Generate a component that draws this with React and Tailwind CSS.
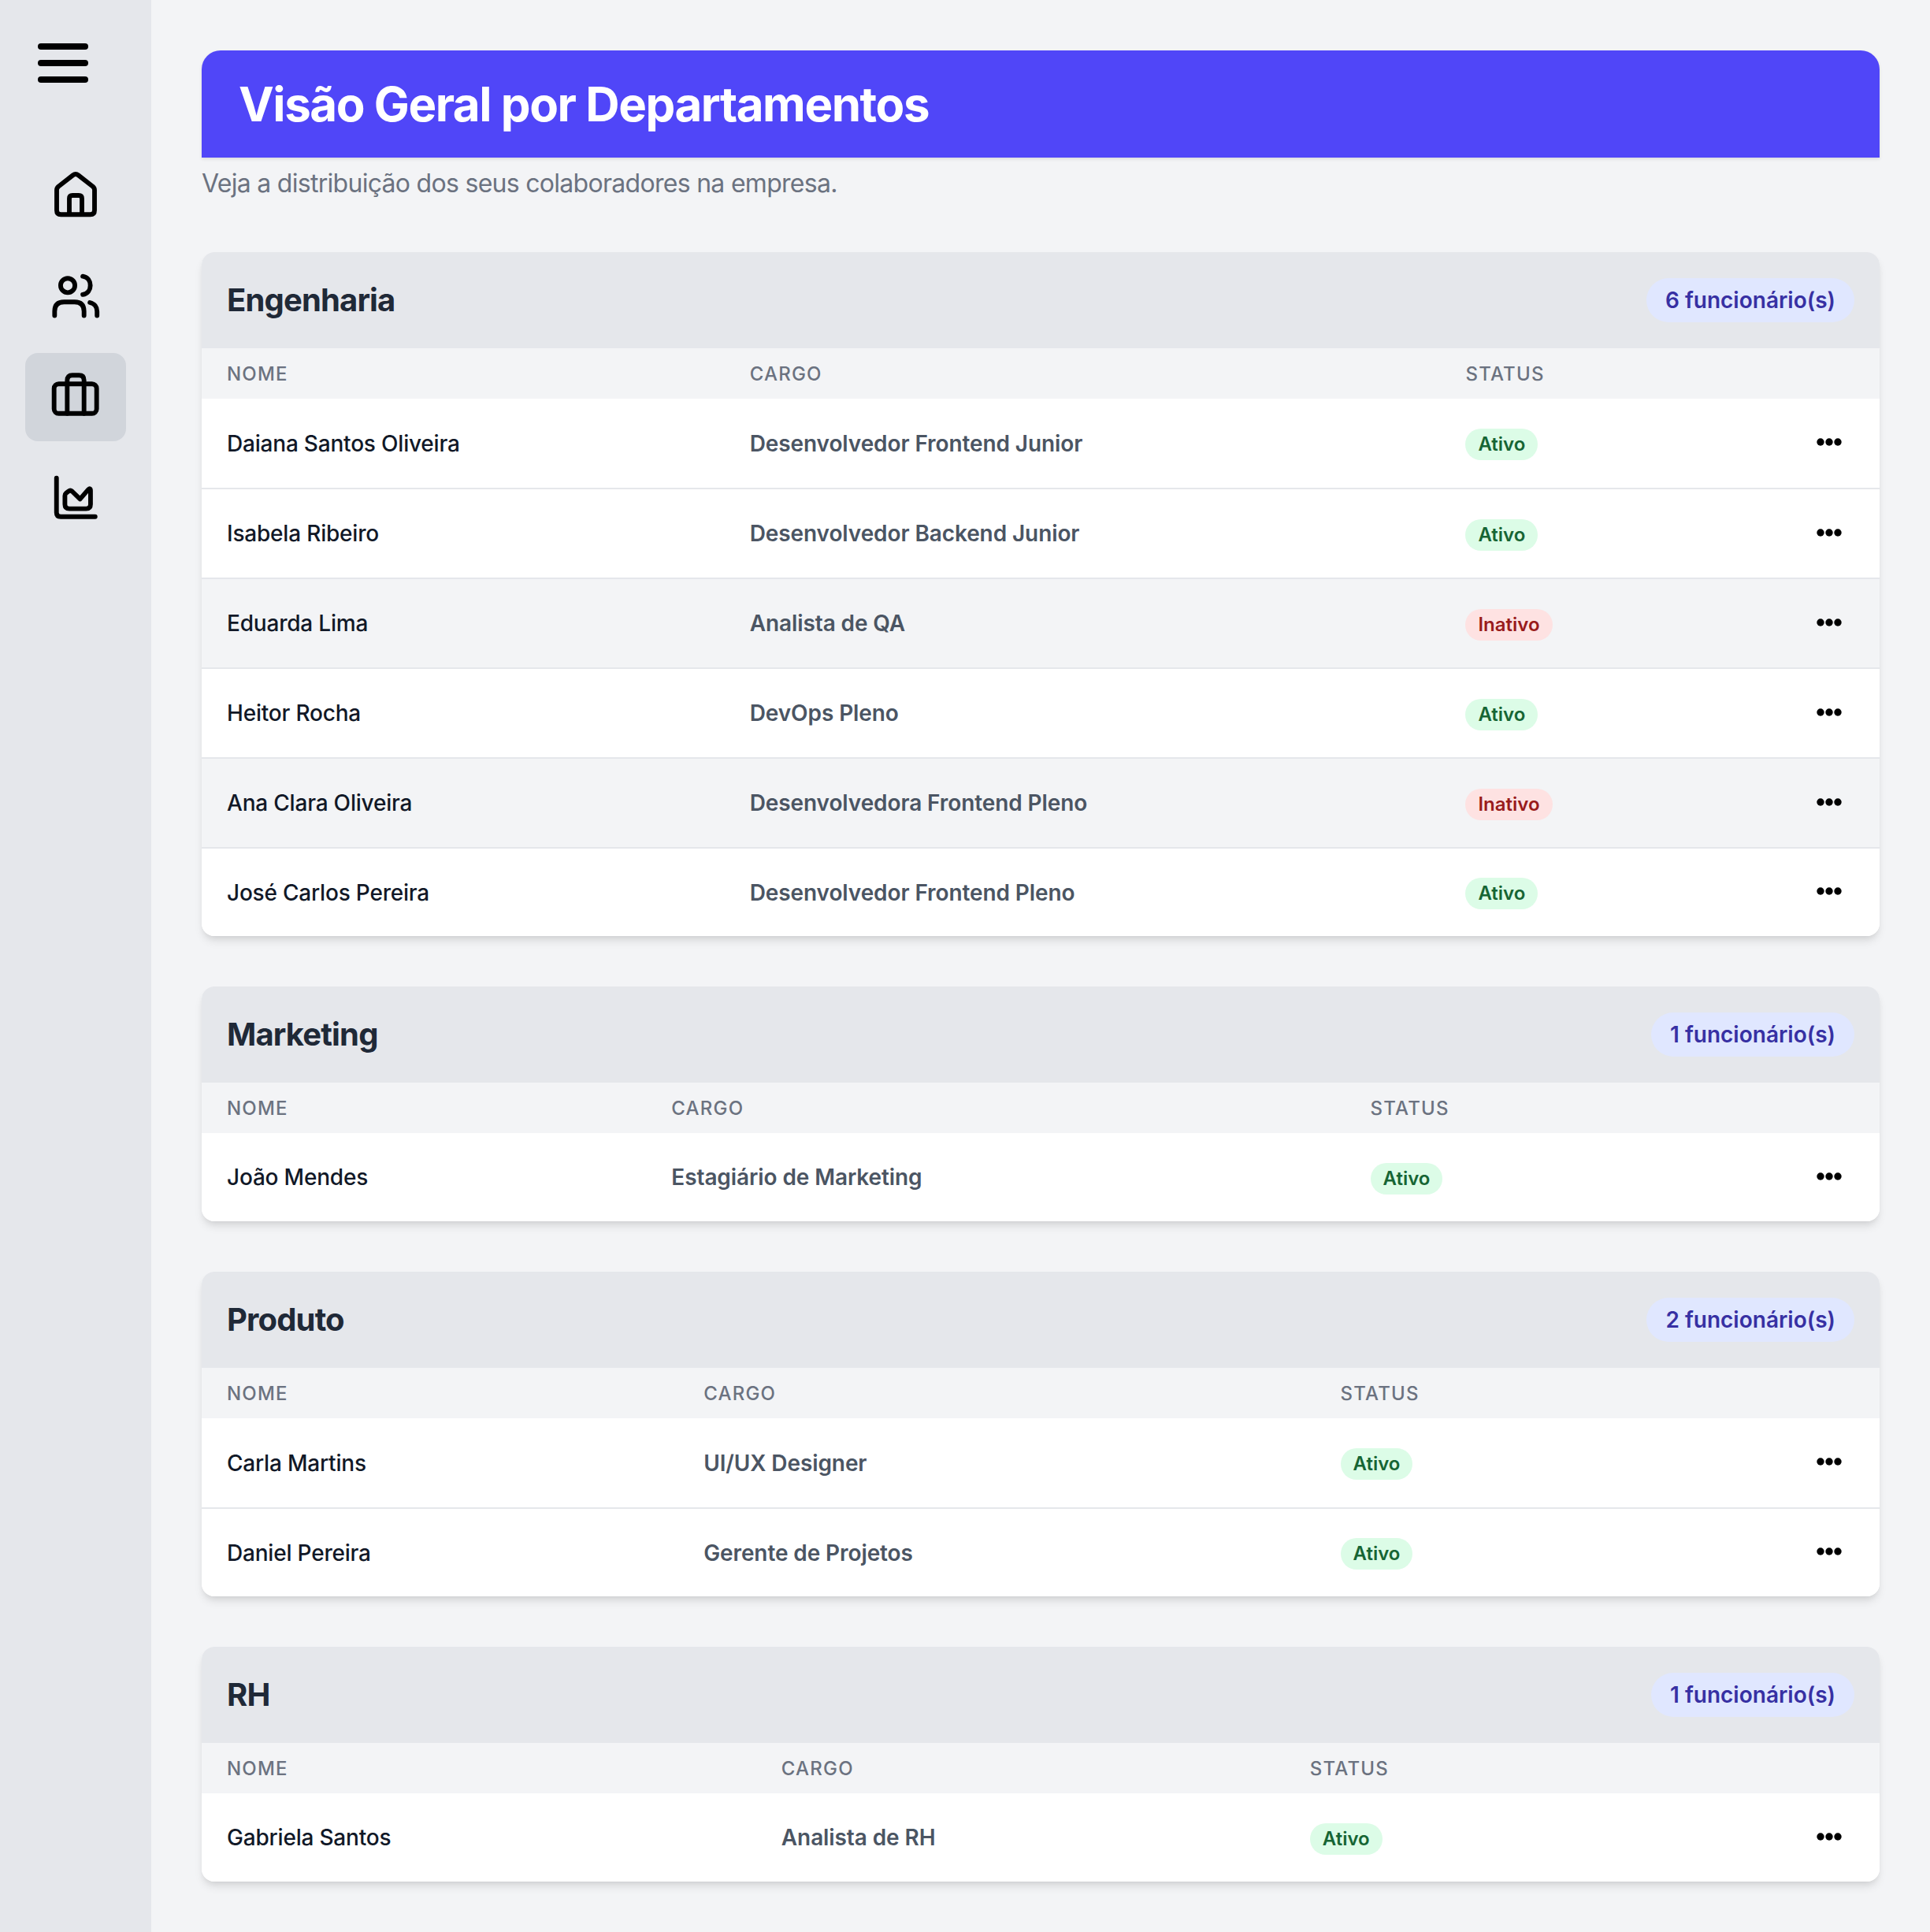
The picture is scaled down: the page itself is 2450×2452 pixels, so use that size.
const DEPARTMENTS = [
  {
    name: 'Engenharia',
    people: [
      { name: 'Daiana Santos Oliveira', role: 'Desenvolvedor Frontend Junior', active: true },
      { name: 'Isabela Ribeiro', role: 'Desenvolvedor Backend Junior', active: true },
      { name: 'Eduarda Lima', role: 'Analista de QA', active: false },
      { name: 'Heitor Rocha', role: 'DevOps Pleno', active: true },
      { name: 'Ana Clara Oliveira', role: 'Desenvolvedora Frontend Pleno', active: false },
      { name: 'José Carlos Pereira', role: 'Desenvolvedor Frontend Pleno', active: true },
    ],
  },
  {
    name: 'Marketing',
    people: [{ name: 'João Mendes', role: 'Estagiário de Marketing', active: true }],
  },
  {
    name: 'Produto',
    people: [
      { name: 'Carla Martins', role: 'UI/UX Designer', active: true },
      { name: 'Daniel Pereira', role: 'Gerente de Projetos', active: true },
    ],
  },
  {
    name: 'RH',
    people: [{ name: 'Gabriela Santos', role: 'Analista de RH', active: true }],
  },
]

const NavIcons = [
  () => (
    <path transform="translate(0 -0.5)" d="M3 10 Q3 9 3.8 8.3 L10.7 2.9 Q12 1.9 13.3 2.9 L20.2 8.3 Q21 9 21 10 V19.6 Q21 21.6 19 21.6 H5 Q3 21.6 3 19.6 Z M9 21.6 V14 Q9 12.5 10.5 12.5 H13.5 Q15 12.5 15 14 V21.6" />
  ),
  () => (
    <g transform="translate(0 -0.4)">
      <circle cx="8.25" cy="7.25" r="3.4" />
      <path d="M2 21.6 V19.5 Q2 15.1 6.5 15.1 H11.5 Q16 15.1 16 19.5 V21.6" />
      <path d="M15.4 2.9 C20.2 3.6 20.2 10.9 15.4 11.6" />
      <path d="M18.8 15.4 C21 15.9 22.2 17.6 22.2 19.6 V21.6" />
    </g>
  ),
  () => (
    <>
      <rect x="1.75" y="5.7" width="20.25" height="14.1" rx="2.2" />
      <path d="M8 19.8 V4 Q8 1.6 10.4 1.6 H13.6 Q16 1.6 16 4 V19.8" />
    </>
  ),
  () => (
    <>
      <path d="M2.9 2.5 V18.9 Q2.9 20.9 4.9 20.9 H21.3" />
      <path d="M6.9 11 Q6.9 10.2 7.5 9.7 L8.6 8.8 Q9.5 8.1 10.4 8.9 L14.1 12.5 L18 8 Q19.1 7 19.1 8.5 V15 Q19.1 17.1 17 17.1 H9 Q6.9 17.1 6.9 15 Z" />
    </>
  ),
]

function Dots() {
  return (
    <svg viewBox="0 0 32 10" width="32" height="10" fill="currentColor">
      <circle cx="5" cy="5" r="4.7" />
      <circle cx="16" cy="5" r="4.7" />
      <circle cx="27" cy="5" r="4.7" />
    </svg>
  )
}

function Department({ name, people }) {
  return (
    <section className="rounded-[16px] overflow-hidden bg-white shadow-[0_8px_12px_-2px_rgba(0,0,0,0.1),0_4px_8px_-4px_rgba(0,0,0,0.1)]">
      <div className="flex items-center justify-between bg-[#e5e7eb] h-[122px] px-[32px]">
        <h2 className="text-[40px] leading-[56px] font-bold tracking-[-0.85px] text-[#1f2937]">{name}</h2>
        <span className="rounded-full bg-[#e0e7ff] px-[24px] py-[8px] text-[28px] leading-[40px] font-semibold text-[#3730a3]">
          {people.length} funcionário(s)
        </span>
      </div>
      <table className="w-full">
        <thead className="bg-[#f3f4f6]">
          <tr>
            {['Nome', 'Cargo', 'Status'].map((h) => (
              <th key={h} className="px-[32px] pt-[17px] pb-[15px] text-left text-[24px] leading-[32px] font-medium uppercase tracking-[1.2px] text-[#6b7280]">
                {h}
              </th>
            ))}
            <th className="px-[48px]"><span className="block w-[32px]"></span></th>
          </tr>
        </thead>
        <tbody>
          {people.map((p, i) => (
            <tr key={p.name} className={`border-b-2 border-[#e5e7eb] last:border-b-0 ${p.active ? 'bg-white' : 'bg-[#f3f4f6]'}`}>
              <td className={`px-[32px] text-[28px] font-medium tracking-[-0.2px] text-[#111827] whitespace-nowrap ${i < people.length - 1 ? 'h-[114px]' : 'h-[112px]'}`}>{p.name}</td>
              <td className="px-[32px] text-[28px] font-semibold tracking-[-0.1px] text-[#4b5563] whitespace-nowrap">{p.role}</td>
              <td className="px-[32px]">
                <span className={`inline-block mt-[3px] rounded-full px-[16px] py-[4px] text-[24px] leading-[32px] font-semibold ${p.active ? 'bg-[#dcfce7] text-[#166534]' : 'bg-[#fee2e2] text-[#991b1b]'}`}>
                  {p.active ? 'Ativo' : 'Inativo'}
                </span>
              </td>
              <td className="px-[48px] text-right">
                <button className="inline-flex align-middle -mt-[6px] text-black"><Dots /></button>
              </td>
            </tr>
          ))}
        </tbody>
      </table>
    </section>
  )
}

export default function App() {
  return (
    <div className="flex min-h-[2452px] bg-[#f3f4f6] font-['Inter',sans-serif]">
      <aside className="w-[192px] shrink-0 bg-[#e5e7eb] flex flex-col items-center">
        <button className="mt-[55px] self-start ml-[48px] flex flex-col gap-[13px]">
          <span className="block w-[64px] h-[8px] rounded-full bg-black"></span>
          <span className="block w-[64px] h-[8px] rounded-full bg-black"></span>
          <span className="block w-[64px] h-[8px] rounded-full bg-black"></span>
        </button>
        <nav className="mt-[87px] flex flex-col gap-[16px]">
          {NavIcons.map((Icon, i) => (
            <a key={i} href="#" className={`w-[128px] h-[112px] rounded-[16px] flex items-center justify-center ${i === 2 ? 'bg-[#d1d5db]' : ''}`}>
              <svg viewBox="0 0 24 24" width="64" height="64" fill="none" stroke="black" strokeWidth="2.2" strokeLinecap="round" strokeLinejoin="round">
                <Icon />
              </svg>
            </a>
          ))}
        </nav>
      </aside>
      <main className="flex-1 p-[64px]">
        <div className="rounded-t-[24px] bg-[#5046f8] pl-[47px] pr-[48px] py-[32px] shadow-[0_2px_4px_rgba(0,0,0,0.1)]">
          <h1 className="text-[60px] leading-[72px] font-bold tracking-[-1.45px] text-white">Visão Geral por Departamentos</h1>
        </div>
        <p className="mt-[8px] pt-[1px] text-[32px] leading-[48px] tracking-[-0.71px] text-[#6b7280]">Veja a distribuição dos seus colaboradores na empresa.</p>
        <div className="mt-[63px] flex flex-col gap-[64px]">
          {DEPARTMENTS.map((d) => (
            <Department key={d.name} {...d} />
          ))}
        </div>
      </main>
    </div>
  )
}
